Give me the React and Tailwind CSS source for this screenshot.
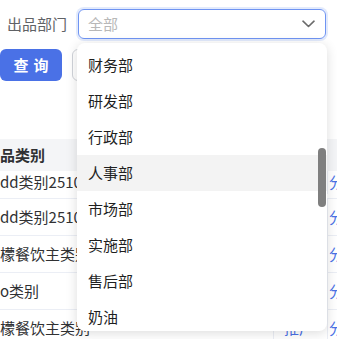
import React from "react";

const rows = [
  { name: "新dd类别251015", h: "h-[28px] pb-[4px]" },
  { name: "新dd类别251016", h: "h-[37px]" },
  { name: "柠檬餐饮主类别", h: "h-[37px]" },
  { name: "新o类别", h: "h-[37px]" },
  { name: "柠檬餐饮主类别", h: "h-[37px]" },
];

const depts = ["财务部", "研发部", "行政部", "人事部", "市场部", "实施部", "售后部", "奶油"];

const App = () => {
  return (
    <div className="relative w-[337px] h-[339px] overflow-hidden bg-white font-['Noto_Sans_CJK_SC','Noto_Sans',sans-serif] text-[15px]">
      {/* Search form */}
      <div className="flex items-center pt-[9px]">
        <span className="ml-[7px] w-[71px] text-[#606266]">出品部门</span>
        <div className="flex items-center justify-between w-[248px] h-[30px] px-[9px] rounded-[6px] border border-[#6f94f2] shadow-[0_0_0_2px_rgba(111,148,242,0.2)]">
          <span className="text-[#b8b8b8]">全部</span>
          <svg width="13" height="8" viewBox="0 0 13 8" className="mr-[1px]">
            <path d="M1 1.2 L6.5 6.5 L12 1.2" fill="none" stroke="#6b6b6b" strokeWidth="1.6" strokeLinecap="round" strokeLinejoin="round" />
          </svg>
        </div>
      </div>

      <div className="flex items-center gap-[10px] mt-[10px]">
        <button className="w-[62px] h-[32px] rounded-[6px] bg-[#4a71e6] text-white font-bold tracking-[5px] pl-[5px]">
          查询
        </button>
        <button className="w-[62px] h-[32px] rounded-[6px] border border-[#d0d3d9] bg-white text-[#606266]">
          重置
        </button>
      </div>

      {/* Table (scrolled horizontally) */}
      <div className="mt-[58px] ml-[-15px] w-[380px]">
        <div className="grid grid-cols-[288px_54px_38px] h-[32px] items-center bg-[#f4f5f7] font-bold text-[#303133]">
          <span className="whitespace-nowrap overflow-hidden">出品类别</span>
          <span></span>
          <span></span>
        </div>
        {rows.map((r, i) => (
          <div
            key={i}
            className={`grid grid-cols-[288px_54px_38px] items-center border-b border-[#ebeef5] text-[#303133] ${r.h}`}
          >
            <span className="whitespace-nowrap overflow-hidden">{r.name}</span>
            <span className="h-full flex items-center pl-[10px] border-l border-[#ebeef5] text-[#4a71e6]">推广</span>
            <span className="h-full flex items-center pl-[1px] border-l border-[#ebeef5] text-[#4a71e6]">分配</span>
          </div>
        ))}
      </div>

      {/* Dropdown */}
      <div className="absolute left-[77px] top-[43px] w-[250px] h-[288px] rounded-[8px] bg-white shadow-[0_2px_12px_rgba(0,0,0,0.14)] overflow-hidden">
        <div className="pt-[4px]">
          {depts.map((d) => (
            <div
              key={d}
              className={`h-[36px] flex items-center px-[11px] text-[#1f1f1f] ${d === "人事部" ? "bg-[#f3f3f3]" : ""}`}
            >
              {d}
            </div>
          ))}
        </div>
        <div className="absolute right-[1px] top-[105px] w-[8px] h-[59px] rounded-full bg-[#7f7f7f]" />
      </div>
    </div>
  );
};

export default App;
